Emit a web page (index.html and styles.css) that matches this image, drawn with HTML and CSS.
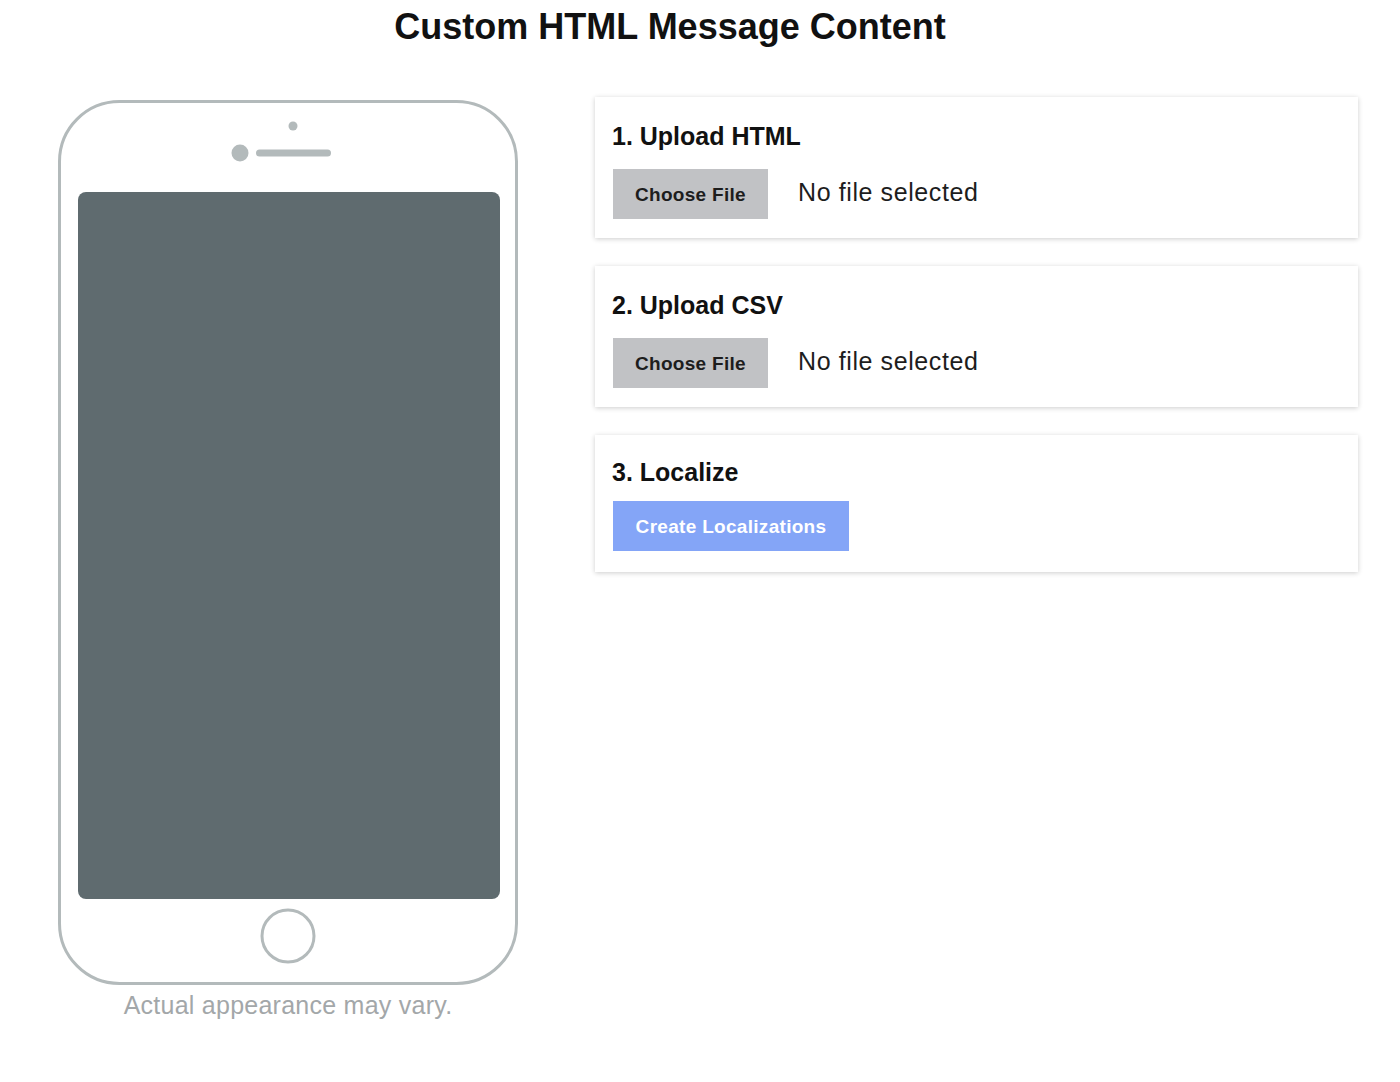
FILE: index.html
```html
<!DOCTYPE html>
<html lang="en">
<head>
<meta charset="utf-8">
<title>Custom HTML Message Content</title>
<link rel="stylesheet" href="styles.css">
</head>
<body>
<h1 class="page-title">Custom HTML Message Content</h1>
<div class="layout">
  <div class="preview">
    <svg class="phone" width="460" height="885" viewBox="0 0 460 885" aria-hidden="true">
      <rect x="1.5" y="1.5" width="457" height="882" rx="60" fill="#fff" stroke="#b3babb" stroke-width="3"/>
      <circle cx="235" cy="26" r="4.5" fill="#b3babb"/>
      <circle cx="182" cy="53" r="8.5" fill="#b3babb"/>
      <rect x="198" y="49.5" width="75" height="7" rx="3.5" fill="#b3babb"/>
      <rect x="20" y="92" width="422" height="707" rx="8" fill="#5f6b6f"/>
      <circle cx="230" cy="836" r="26" fill="none" stroke="#b3babb" stroke-width="3"/>
    </svg>
    <p class="caption">Actual appearance may vary.</p>
  </div>
  <div class="steps">
    <section class="card">
      <h2 class="card-title">1. Upload HTML</h2>
      <div class="file-row">
        <span class="btn btn-file">Choose File</span>
        <span class="file-name">No file selected</span>
      </div>
    </section>
    <section class="card">
      <h2 class="card-title">2. Upload CSV</h2>
      <div class="file-row">
        <span class="btn btn-file">Choose File</span>
        <span class="file-name">No file selected</span>
      </div>
    </section>
    <section class="card card-action">
      <h2 class="card-title">3. Localize</h2>
      <div class="file-row">
        <span class="btn btn-primary">Create Localizations</span>
      </div>
    </section>
  </div>
</div>
</body>
</html>
```

FILE: styles.css
```css
* { box-sizing: border-box; }

body {
  margin: 0;
  background: #fff;
  font-family: "Liberation Sans", Arial, sans-serif;
  color: #111;
}

.page-title {
  margin: 0;
  padding-right: 60px;
  text-align: center;
  font-size: 36px;
  font-weight: 700;
  line-height: 54px;
  color: #111;
}

.layout {
  display: flex;
  align-items: flex-start;
  margin-top: 43px;
}

.preview {
  width: 576px;
  flex: none;
  display: flex;
  flex-direction: column;
  align-items: center;
  padding-top: 3px;
}

.phone { display: block; }

.caption {
  margin: 4px 0 0;
  font-size: 25px;
  line-height: 32px;
  letter-spacing: 0.25px;
  color: #a3a7a9;
}

.steps {
  margin-left: 19px;
  width: 763px;
  display: flex;
  flex-direction: column;
  gap: 28px;
}

.card {
  background: #fff;
  box-shadow: 0 1px 5px rgba(0, 0, 0, 0.2);
  padding: 24px 17px 19px;
  height: 141px;
}

.card-title {
  margin: 0 0 18px;
  font-size: 25px;
  font-weight: 700;
  line-height: 30px;
  color: #111;
}

.card-action {
  height: 137px;
  padding-top: 22px;
}

.card-action .card-title { margin-bottom: 14px; }

.file-row {
  display: flex;
  align-items: center;
  gap: 30px;
  padding-left: 1px;
}

.btn {
  display: inline-flex;
  align-items: center;
  justify-content: center;
  height: 50px;
  padding: 2px 0 0;
  font-size: 19px;
  font-weight: 700;
  letter-spacing: 0.3px;
  white-space: nowrap;
  flex: none;
}

.btn-file {
  width: 155px;
  background: #c1c2c5;
  color: #1d1d1d;
}

.btn-primary {
  width: 236px;
  background: #84a5f7;
  color: #fff;
}

.file-name {
  font-size: 25px;
  letter-spacing: 0.6px;
  color: #1d1d1d;
  padding-bottom: 4px;
  white-space: nowrap;
}
```
